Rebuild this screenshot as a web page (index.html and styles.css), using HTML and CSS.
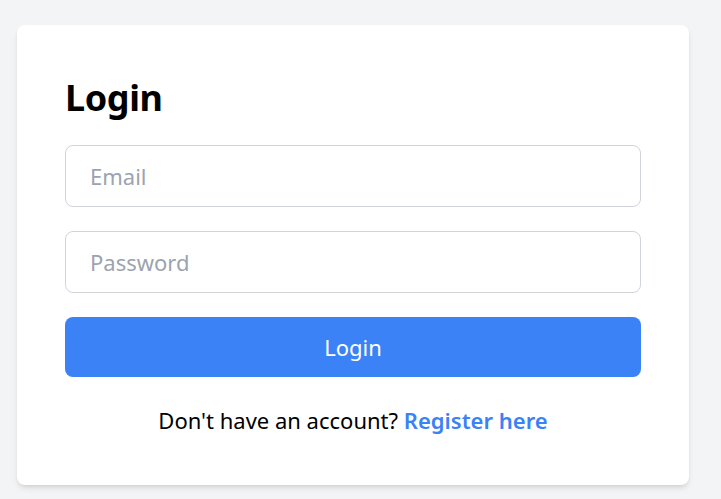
FILE: index.html
```html
<!DOCTYPE html>
<html lang="en">
<head>
<meta charset="utf-8">
<title>Login</title>
<link rel="stylesheet" href="styles.css">
</head>
<body>
<main class="page">
  <section class="card">
    <h1 class="title">Login</h1>
    <form class="form">
      <input class="field" type="email" placeholder="Email">
      <input class="field" type="password" placeholder="Password">
      <button class="btn" type="button">Login</button>
    </form>
    <p class="footer">Don't have an account? <a class="link" href="#">Register here</a></p>
  </section>
</main>
</body>
</html>
```

FILE: styles.css
```css
* { box-sizing: border-box; }
html, body { margin: 0; padding: 0; }
body {
  background: #f3f4f6;
  font-family: "Noto Sans", "Open Sans", Arial, sans-serif;
  color: #111;
}
.page {
  padding: 25px 17px;
}
.card {
  width: 672px;
  background: #fff;
  border-radius: 8px;
  padding: 48px;
  box-shadow: 0 4px 6px -1px rgba(0,0,0,0.1), 0 2px 4px -2px rgba(0,0,0,0.1);
}
.title {
  margin: 0 0 27px;
  padding-top: 5px;
  font-size: 36px;
  line-height: 40px;
  font-weight: 700;
  letter-spacing: -0.4px;
  color: #000;
}
.form {
  display: flex;
  flex-direction: column;
  gap: 24px;
}
.field {
  display: block;
  width: 100%;
  height: 62px;
  padding: 16px 24px;
  font: inherit;
  font-size: 22px;
  line-height: 28px;
  border: 1px solid #d1d5db;
  border-radius: 8px;
  outline: none;
  color: #111;
}
.field::placeholder { color: #9ca3af; }
.btn {
  display: block;
  width: 100%;
  height: 60px;
  border: 0;
  border-radius: 8px;
  background: #3b82f6;
  color: #fff;
  font: inherit;
  font-size: 22px;
  line-height: 28px;
  cursor: pointer;
}
.footer {
  margin: 29px 0 0;
  padding-bottom: 3px;
  text-align: center;
  font-size: 22px;
  line-height: 28px;
  color: #000;
}
.link {
  color: #3b82f6;
  font-weight: 600;
  text-decoration: none;
}
```
